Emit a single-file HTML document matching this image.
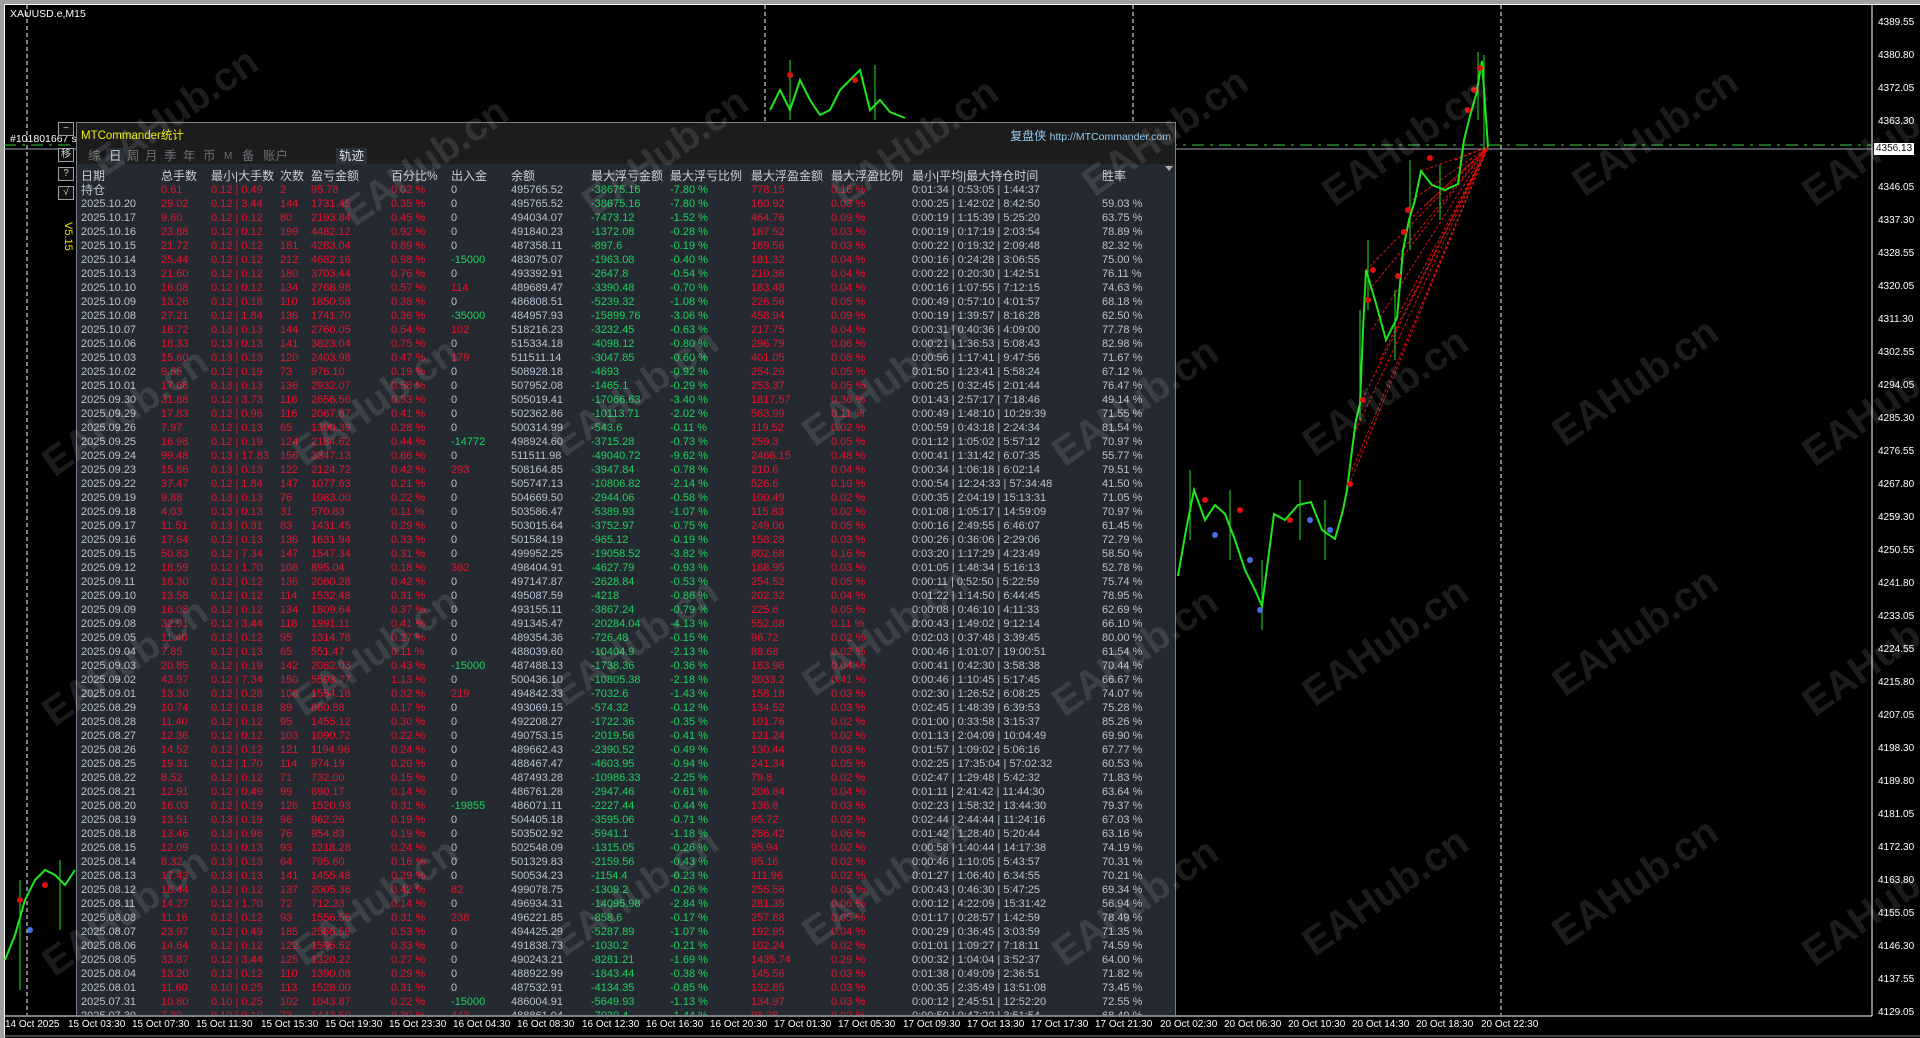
<!DOCTYPE html>
<html><head><meta charset="utf-8">
<style>
*{margin:0;padding:0;box-sizing:border-box}
body{width:1920px;height:1038px;background:#a0a0a0;position:relative;overflow:hidden;font-family:"Liberation Sans","Noto Sans CJK SC",sans-serif}
#chart{position:absolute;left:4px;top:4px;width:1916px;height:1034px;background:#000;border-left:1px solid #fff;border-top:1px solid #fff}
svg{position:absolute;left:0;top:0}
.ax{position:absolute;color:#fff;font-size:10px;white-space:nowrap}
#panel{position:absolute;left:76px;top:122px;width:1100px;height:894px;background:#1c1c1c;border:1px solid #7a808a;overflow:hidden}
#tbl{position:absolute;left:0;top:41px;width:1100px;height:860px;background:#252a32}
.t{position:absolute;font-size:11.5px;white-space:nowrap}
.r{position:absolute;left:0;height:14px;line-height:14px;font-size:11px;width:1100px}
.r i{position:absolute;font-style:normal;white-space:nowrap;color:#b9c2cf}
.r i:nth-child(1){left:4px}.r i:nth-child(2){left:84px}.r i:nth-child(3){left:134px}.r i:nth-child(4){left:203px}.r i:nth-child(5){left:234px}.r i:nth-child(6){left:314px}.r i:nth-child(7){left:374px}.r i:nth-child(8){left:434px}.r i:nth-child(9){left:514px}.r i:nth-child(10){left:593px}.r i:nth-child(11){left:674px}.r i:nth-child(12){left:754px}.r i:nth-child(13){left:835px}.r i:nth-child(14){left:1025px}
.r i:nth-child(2),.r i:nth-child(3),.r i:nth-child(4),.r i:nth-child(5),.r i:nth-child(6),.r i:nth-child(11),.r i:nth-child(12){color:#e5132b}
.r i:nth-child(9),.r i:nth-child(10){color:#1bd35a}
.r i.g{color:#1bd35a}.r i.d{color:#e5132b}
.h i{color:#c8d0dc!important;font-size:12px}
.btn{position:absolute;left:58px;width:16px;height:14px;border:1px solid #9aa0aa;color:#ccc;font-size:10px;text-align:center;line-height:12px;background:#111}
.wm{position:absolute;color:rgba(255,255,255,0.11);font-size:40px;font-weight:bold;transform:rotate(-35deg);white-space:nowrap;pointer-events:none}
.tab{position:absolute;top:25px;color:#6a6e74;font-size:12.5px;height:17px;line-height:17px}
</style></head><body>
<div id="chart"></div>
<svg width="1920" height="1038">
<g stroke="#fff" stroke-dasharray="4,3" stroke-width="1">
<line x1="27" y1="5" x2="27" y2="1015"/><line x1="765" y1="5" x2="765" y2="1015"/><line x1="1133" y1="5" x2="1133" y2="1015"/><line x1="1501" y1="5" x2="1501" y2="1015"/>
</g>
<line x1="1872" y1="4" x2="1872" y2="1016" stroke="#fff"/>
<line x1="4" y1="1016" x2="1872" y2="1016" stroke="#fff"/>
<line x1="4" y1="1036" x2="1920" y2="1036" stroke="#888"/>
<line x1="4" y1="149" x2="1872" y2="149" stroke="#9aa4b0"/>
<line x1="4" y1="145" x2="1872" y2="145" stroke="#3cd03c" stroke-dasharray="12,6,3,6"/>
<g stroke="#e01010" stroke-dasharray="3,2" stroke-width="1" fill="none">
<line x1="1360" y1="404" x2="1488" y2="147"/><line x1="1352" y1="470" x2="1488" y2="147"/><line x1="1356" y1="430" x2="1488" y2="147"/><line x1="1366" y1="270" x2="1488" y2="147"/><line x1="1369" y1="290" x2="1488" y2="147"/><line x1="1372" y1="330" x2="1488" y2="147"/><line x1="1397" y1="318" x2="1488" y2="147"/><line x1="1400" y1="260" x2="1488" y2="147"/><line x1="1409" y1="220" x2="1488" y2="147"/><line x1="1412" y1="200" x2="1488" y2="147"/><line x1="1421" y1="171" x2="1488" y2="147"/><line x1="1426" y1="205" x2="1488" y2="147"/><line x1="1347" y1="490" x2="1488" y2="147"/><line x1="1380" y1="360" x2="1488" y2="147"/><line x1="1455" y1="160" x2="1488" y2="147"/>
</g>
<g stroke="#1ee61e" stroke-width="2" fill="none">
<polyline points="1178,576 1186,530 1194,490 1205,520 1215,505 1225,514 1235,540 1245,570 1255,590 1262,606 1268,560 1274,514 1285,520 1298,505 1311,502 1322,530 1335,539 1343,510 1347,490 1352,450 1356,420 1360,404 1363,330 1366,270 1375,300 1386,340 1397,318 1403,250 1409,220 1415,200 1421,171 1432,185 1445,190 1458,184 1464,140 1470,116 1476,95 1482,61 1488,147"/>
<polyline points="5,960 15,935 25,900 35,880 45,870 55,875 65,885 75,870"/>
<polyline points="770,110 780,90 790,110 800,80 810,100 820,115 830,110 840,90 850,80 860,70 870,110 880,100 890,112 905,118"/>
</g>
<g stroke="#1ee61e" stroke-width="1">
<line x1="1190" y1="470" x2="1190" y2="540"/><line x1="1230" y1="490" x2="1230" y2="560"/><line x1="1262" y1="560" x2="1262" y2="630"/><line x1="1300" y1="480" x2="1300" y2="540"/><line x1="1325" y1="500" x2="1325" y2="560"/><line x1="1360" y1="310" x2="1360" y2="420"/><line x1="1368" y1="240" x2="1368" y2="310"/><line x1="1395" y1="290" x2="1395" y2="360"/><line x1="1410" y1="160" x2="1410" y2="250"/><line x1="1440" y1="165" x2="1440" y2="220"/><line x1="1478" y1="52" x2="1478" y2="120"/><line x1="1484" y1="55" x2="1484" y2="150"/><line x1="790" y1="60" x2="790" y2="120"/><line x1="875" y1="65" x2="875" y2="120"/><line x1="20" y1="880" x2="20" y2="990"/><line x1="60" y1="860" x2="60" y2="930"/>
</g>
<g fill="#e01010">
<circle cx="1205" cy="500" r="3"/><circle cx="1240" cy="510" r="3"/><circle cx="1290" cy="520" r="3"/><circle cx="1350" cy="484" r="3"/><circle cx="1363" cy="400" r="3"/><circle cx="1368" cy="300" r="3"/><circle cx="1373" cy="270" r="3"/><circle cx="1398" cy="276" r="3"/><circle cx="1404" cy="232" r="3"/><circle cx="1408" cy="210" r="3"/><circle cx="1430" cy="158" r="3"/><circle cx="1468" cy="110" r="3"/><circle cx="1474" cy="90" r="3"/><circle cx="1480" cy="68" r="3"/><circle cx="790" cy="75" r="3"/><circle cx="855" cy="80" r="3"/><circle cx="20" cy="900" r="3"/><circle cx="45" cy="885" r="3"/>
</g>
<g fill="#4a70e0"><circle cx="1215" cy="535" r="3"/><circle cx="1250" cy="560" r="3"/><circle cx="1260" cy="610" r="3"/><circle cx="1310" cy="520" r="3"/><circle cx="1330" cy="530" r="3"/><circle cx="30" cy="930" r="3"/></g>
</svg>
<div class="ax" style="left:10px;top:8px;font-size:10.5px">XAUUSD.e,M15</div>
<div class="ax" style="left:10px;top:133px;font-size:10.5px">#101801667 se</div>
<div class="ax" style="left:1878px;top:17px">4389.55</div><div class="ax" style="left:1878px;top:50px">4380.80</div><div class="ax" style="left:1878px;top:83px">4372.05</div><div class="ax" style="left:1878px;top:116px">4363.30</div><div class="ax" style="left:1878px;top:182px">4346.05</div><div class="ax" style="left:1878px;top:215px">4337.30</div><div class="ax" style="left:1878px;top:248px">4328.55</div><div class="ax" style="left:1878px;top:281px">4320.05</div><div class="ax" style="left:1878px;top:314px">4311.30</div><div class="ax" style="left:1878px;top:347px">4302.55</div><div class="ax" style="left:1878px;top:380px">4294.05</div><div class="ax" style="left:1878px;top:413px">4285.30</div><div class="ax" style="left:1878px;top:446px">4276.55</div><div class="ax" style="left:1878px;top:479px">4267.80</div><div class="ax" style="left:1878px;top:512px">4259.30</div><div class="ax" style="left:1878px;top:545px">4250.55</div><div class="ax" style="left:1878px;top:578px">4241.80</div><div class="ax" style="left:1878px;top:611px">4233.05</div><div class="ax" style="left:1878px;top:644px">4224.55</div><div class="ax" style="left:1878px;top:677px">4215.80</div><div class="ax" style="left:1878px;top:710px">4207.05</div><div class="ax" style="left:1878px;top:743px">4198.30</div><div class="ax" style="left:1878px;top:776px">4189.80</div><div class="ax" style="left:1878px;top:809px">4181.05</div><div class="ax" style="left:1878px;top:842px">4172.30</div><div class="ax" style="left:1878px;top:875px">4163.80</div><div class="ax" style="left:1878px;top:908px">4155.05</div><div class="ax" style="left:1878px;top:941px">4146.30</div><div class="ax" style="left:1878px;top:974px">4137.55</div><div class="ax" style="left:1878px;top:1007px">4129.05</div>
<div class="ax" style="left:1874px;top:143px;background:#fff;color:#000;padding:0 2px;line-height:12px">4356.13</div>
<div class="ax" style="left:5px;top:1019px">14 Oct 2025</div><div class="ax" style="left:68px;top:1019px">15 Oct 03:30</div><div class="ax" style="left:132px;top:1019px">15 Oct 07:30</div><div class="ax" style="left:196px;top:1019px">15 Oct 11:30</div><div class="ax" style="left:261px;top:1019px">15 Oct 15:30</div><div class="ax" style="left:325px;top:1019px">15 Oct 19:30</div><div class="ax" style="left:389px;top:1019px">15 Oct 23:30</div><div class="ax" style="left:453px;top:1019px">16 Oct 04:30</div><div class="ax" style="left:517px;top:1019px">16 Oct 08:30</div><div class="ax" style="left:582px;top:1019px">16 Oct 12:30</div><div class="ax" style="left:646px;top:1019px">16 Oct 16:30</div><div class="ax" style="left:710px;top:1019px">16 Oct 20:30</div><div class="ax" style="left:774px;top:1019px">17 Oct 01:30</div><div class="ax" style="left:838px;top:1019px">17 Oct 05:30</div><div class="ax" style="left:903px;top:1019px">17 Oct 09:30</div><div class="ax" style="left:967px;top:1019px">17 Oct 13:30</div><div class="ax" style="left:1031px;top:1019px">17 Oct 17:30</div><div class="ax" style="left:1095px;top:1019px">17 Oct 21:30</div><div class="ax" style="left:1160px;top:1019px">20 Oct 02:30</div><div class="ax" style="left:1224px;top:1019px">20 Oct 06:30</div><div class="ax" style="left:1288px;top:1019px">20 Oct 10:30</div><div class="ax" style="left:1352px;top:1019px">20 Oct 14:30</div><div class="ax" style="left:1416px;top:1019px">20 Oct 18:30</div><div class="ax" style="left:1481px;top:1019px">20 Oct 22:30</div>
<div class="btn" style="top:122px">−</div><div class="btn" style="top:148px">移</div><div class="btn" style="top:167px">?</div><div class="btn" style="top:186px">√</div>
<div style="position:absolute;top:222px;color:#e8e800;font-size:11px;transform:rotate(90deg);transform-origin:left top;left:74px">V5.15</div>
<div id="panel">
<div class="t" style="left:4px;top:4px;color:#f0f000">MTCommander统计</div>
<div class="t" style="right:4px;top:4px;color:#8fcaf0;font-size:12px">复盘侠 <span style="font-size:10.5px">http://MTCommander.com</span></div>
<div class="tab" style="left:11px">综</div>
<div class="tab" style="left:29px;background:#2a3039;color:#c8d0dc;padding:0 3px">日</div>
<div class="tab" style="left:50px">周</div><div class="tab" style="left:68px">月</div><div class="tab" style="left:87px">季</div><div class="tab" style="left:106px">年</div><div class="tab" style="left:126px">币</div><div class="tab" style="left:147px;font-size:10px">M</div><div class="tab" style="left:165px">备</div><div class="tab" style="left:186px">账户</div>
<div class="tab" style="left:259px;background:#2a3039;color:#d8dde4;padding:0 3px">轨迹</div>
<div id="tbl">
<div style="position:absolute;right:4px;top:2px;width:0;height:0;border-left:4px solid transparent;border-right:4px solid transparent;border-top:5px solid #aaa"></div>
<div class="r h" style="top:5px"><i>日期</i><i>总手数</i><i>最小|大手数</i><i>次数</i><i>盈亏金额</i><i>百分比%</i><i>出入金</i><i>余额</i><i>最大浮亏金额</i><i>最大浮亏比例</i><i>最大浮盈金额</i><i>最大浮盈比例</i><i>最小|平均|最大持仓时间</i><i>胜率</i></div>
<div class="r" style="top:19px"><i style="font-size:12px">持仓</i><i>0.61</i><i>0.12 | 0.49</i><i>2</i><i>95.78</i><i>0.02 %</i><i>0</i><i>495765.52</i><i>-38675.16</i><i>-7.80 %</i><i>778.15</i><i>0.16 %</i><i>0:01:34 | 0:53:05 | 1:44:37</i><i></i></div>
<div class="r" style="top:33px"><i>2025.10.20</i><i>29.02</i><i>0.12 | 3.44</i><i>144</i><i>1731.45</i><i>0.35 %</i><i>0</i><i>495765.52</i><i>-38675.16</i><i>-7.80 %</i><i>160.92</i><i>0.03 %</i><i>0:00:25 | 1:42:02 | 8:42:50</i><i>59.03 %</i></div>
<div class="r" style="top:47px"><i>2025.10.17</i><i>9.60</i><i>0.12 | 0.12</i><i>80</i><i>2193.84</i><i>0.45 %</i><i>0</i><i>494034.07</i><i>-7473.12</i><i>-1.52 %</i><i>464.76</i><i>0.09 %</i><i>0:00:19 | 1:15:39 | 5:25:20</i><i>63.75 %</i></div>
<div class="r" style="top:61px"><i>2025.10.16</i><i>23.88</i><i>0.12 | 0.12</i><i>199</i><i>4482.12</i><i>0.92 %</i><i>0</i><i>491840.23</i><i>-1372.08</i><i>-0.28 %</i><i>167.52</i><i>0.03 %</i><i>0:00:19 | 0:17:19 | 2:03:54</i><i>78.89 %</i></div>
<div class="r" style="top:75px"><i>2025.10.15</i><i>21.72</i><i>0.12 | 0.12</i><i>181</i><i>4283.04</i><i>0.89 %</i><i>0</i><i>487358.11</i><i>-897.6</i><i>-0.19 %</i><i>169.56</i><i>0.03 %</i><i>0:00:22 | 0:19:32 | 2:09:48</i><i>82.32 %</i></div>
<div class="r" style="top:89px"><i>2025.10.14</i><i>25.44</i><i>0.12 | 0.12</i><i>212</i><i>4682.16</i><i>0.98 %</i><i class="g">-15000</i><i>483075.07</i><i>-1963.08</i><i>-0.40 %</i><i>181.32</i><i>0.04 %</i><i>0:00:16 | 0:24:28 | 3:06:55</i><i>75.00 %</i></div>
<div class="r" style="top:103px"><i>2025.10.13</i><i>21.60</i><i>0.12 | 0.12</i><i>180</i><i>3703.44</i><i>0.76 %</i><i>0</i><i>493392.91</i><i>-2647.8</i><i>-0.54 %</i><i>210.36</i><i>0.04 %</i><i>0:00:22 | 0:20:30 | 1:42:51</i><i>76.11 %</i></div>
<div class="r" style="top:117px"><i>2025.10.10</i><i>16.08</i><i>0.12 | 0.12</i><i>134</i><i>2768.98</i><i>0.57 %</i><i class="d">114</i><i>489689.47</i><i>-3390.48</i><i>-0.70 %</i><i>183.48</i><i>0.04 %</i><i>0:00:16 | 1:07:55 | 7:12:15</i><i>74.63 %</i></div>
<div class="r" style="top:131px"><i>2025.10.09</i><i>13.26</i><i>0.12 | 0.18</i><i>110</i><i>1850.58</i><i>0.38 %</i><i>0</i><i>486808.51</i><i>-5239.32</i><i>-1.08 %</i><i>226.56</i><i>0.05 %</i><i>0:00:49 | 0:57:10 | 4:01:57</i><i>68.18 %</i></div>
<div class="r" style="top:145px"><i>2025.10.08</i><i>27.21</i><i>0.12 | 1.84</i><i>136</i><i>1741.70</i><i>0.36 %</i><i class="g">-35000</i><i>484957.93</i><i>-15899.76</i><i>-3.06 %</i><i>458.94</i><i>0.09 %</i><i>0:00:19 | 1:39:57 | 8:16:28</i><i>62.50 %</i></div>
<div class="r" style="top:159px"><i>2025.10.07</i><i>18.72</i><i>0.13 | 0.13</i><i>144</i><i>2760.05</i><i>0.54 %</i><i class="d">102</i><i>518216.23</i><i>-3232.45</i><i>-0.63 %</i><i>217.75</i><i>0.04 %</i><i>0:00:31 | 0:40:36 | 4:09:00</i><i>77.78 %</i></div>
<div class="r" style="top:173px"><i>2025.10.06</i><i>18.33</i><i>0.13 | 0.13</i><i>141</i><i>3823.04</i><i>0.75 %</i><i>0</i><i>515334.18</i><i>-4098.12</i><i>-0.80 %</i><i>296.79</i><i>0.06 %</i><i>0:00:21 | 1:36:53 | 5:08:43</i><i>82.98 %</i></div>
<div class="r" style="top:187px"><i>2025.10.03</i><i>15.60</i><i>0.13 | 0.13</i><i>120</i><i>2403.98</i><i>0.47 %</i><i class="d">179</i><i>511511.14</i><i>-3047.85</i><i>-0.60 %</i><i>401.05</i><i>0.08 %</i><i>0:00:56 | 1:17:41 | 9:47:56</i><i>71.67 %</i></div>
<div class="r" style="top:201px"><i>2025.10.02</i><i>9.55</i><i>0.12 | 0.19</i><i>73</i><i>976.10</i><i>0.19 %</i><i>0</i><i>508928.18</i><i>-4693</i><i>-0.92 %</i><i>254.26</i><i>0.05 %</i><i>0:01:50 | 1:23:41 | 5:58:24</i><i>67.12 %</i></div>
<div class="r" style="top:215px"><i>2025.10.01</i><i>17.68</i><i>0.13 | 0.13</i><i>136</i><i>2932.07</i><i>0.58 %</i><i>0</i><i>507952.08</i><i>-1465.1</i><i>-0.29 %</i><i>253.37</i><i>0.05 %</i><i>0:00:25 | 0:32:45 | 2:01:44</i><i>76.47 %</i></div>
<div class="r" style="top:229px"><i>2025.09.30</i><i>31.88</i><i>0.12 | 3.73</i><i>116</i><i>2656.56</i><i>0.53 %</i><i>0</i><i>505019.41</i><i>-17066.63</i><i>-3.40 %</i><i>1817.57</i><i>0.36 %</i><i>0:01:43 | 2:57:17 | 7:18:46</i><i>49.14 %</i></div>
<div class="r" style="top:243px"><i>2025.09.29</i><i>17.83</i><i>0.12 | 0.96</i><i>116</i><i>2067.87</i><i>0.41 %</i><i>0</i><i>502362.86</i><i>-10113.71</i><i>-2.02 %</i><i>563.99</i><i>0.11 %</i><i>0:00:49 | 1:48:10 | 10:29:39</i><i>71.55 %</i></div>
<div class="r" style="top:257px"><i>2025.09.26</i><i>7.97</i><i>0.12 | 0.13</i><i>65</i><i>1390.39</i><i>0.28 %</i><i>0</i><i>500314.99</i><i>-543.6</i><i>-0.11 %</i><i>119.52</i><i>0.02 %</i><i>0:00:59 | 0:43:18 | 2:24:34</i><i>81.54 %</i></div>
<div class="r" style="top:271px"><i>2025.09.25</i><i>16.98</i><i>0.12 | 0.19</i><i>124</i><i>2184.62</i><i>0.44 %</i><i class="g">-14772</i><i>498924.60</i><i>-3715.28</i><i>-0.73 %</i><i>259.3</i><i>0.05 %</i><i>0:01:12 | 1:05:02 | 5:57:12</i><i>70.97 %</i></div>
<div class="r" style="top:285px"><i>2025.09.24</i><i>99.48</i><i>0.13 | 17.83</i><i>156</i><i>3347.13</i><i>0.66 %</i><i>0</i><i>511511.98</i><i>-49040.72</i><i>-9.62 %</i><i>2466.15</i><i>0.48 %</i><i>0:00:41 | 1:31:42 | 6:07:35</i><i>55.77 %</i></div>
<div class="r" style="top:299px"><i>2025.09.23</i><i>15.86</i><i>0.13 | 0.13</i><i>122</i><i>2124.72</i><i>0.42 %</i><i class="d">293</i><i>508164.85</i><i>-3947.84</i><i>-0.78 %</i><i>210.6</i><i>0.04 %</i><i>0:00:34 | 1:06:18 | 6:02:14</i><i>79.51 %</i></div>
<div class="r" style="top:313px"><i>2025.09.22</i><i>37.47</i><i>0.12 | 1.84</i><i>147</i><i>1077.63</i><i>0.21 %</i><i>0</i><i>505747.13</i><i>-10806.82</i><i>-2.14 %</i><i>526.6</i><i>0.10 %</i><i>0:00:54 | 12:24:33 | 57:34:48</i><i>41.50 %</i></div>
<div class="r" style="top:327px"><i>2025.09.19</i><i>9.88</i><i>0.13 | 0.13</i><i>76</i><i>1083.00</i><i>0.22 %</i><i>0</i><i>504669.50</i><i>-2944.06</i><i>-0.58 %</i><i>100.49</i><i>0.02 %</i><i>0:00:35 | 2:04:19 | 15:13:31</i><i>71.05 %</i></div>
<div class="r" style="top:341px"><i>2025.09.18</i><i>4.03</i><i>0.13 | 0.13</i><i>31</i><i>570.83</i><i>0.11 %</i><i>0</i><i>503586.47</i><i>-5389.93</i><i>-1.07 %</i><i>115.83</i><i>0.02 %</i><i>0:01:08 | 1:05:17 | 14:59:09</i><i>70.97 %</i></div>
<div class="r" style="top:355px"><i>2025.09.17</i><i>11.51</i><i>0.13 | 0.31</i><i>83</i><i>1431.45</i><i>0.29 %</i><i>0</i><i>503015.64</i><i>-3752.97</i><i>-0.75 %</i><i>249.06</i><i>0.05 %</i><i>0:00:16 | 2:49:55 | 6:46:07</i><i>61.45 %</i></div>
<div class="r" style="top:369px"><i>2025.09.16</i><i>17.64</i><i>0.12 | 0.13</i><i>136</i><i>1631.94</i><i>0.33 %</i><i>0</i><i>501584.19</i><i>-965.12</i><i>-0.19 %</i><i>158.28</i><i>0.03 %</i><i>0:00:26 | 0:36:06 | 2:29:06</i><i>72.79 %</i></div>
<div class="r" style="top:383px"><i>2025.09.15</i><i>50.83</i><i>0.12 | 7.34</i><i>147</i><i>1547.34</i><i>0.31 %</i><i>0</i><i>499952.25</i><i>-19058.52</i><i>-3.82 %</i><i>802.68</i><i>0.16 %</i><i>0:03:20 | 1:17:29 | 4:23:49</i><i>58.50 %</i></div>
<div class="r" style="top:397px"><i>2025.09.12</i><i>18.59</i><i>0.12 | 1.70</i><i>108</i><i>895.04</i><i>0.18 %</i><i class="d">362</i><i>498404.91</i><i>-4627.79</i><i>-0.93 %</i><i>168.95</i><i>0.03 %</i><i>0:01:05 | 1:48:34 | 5:16:13</i><i>52.78 %</i></div>
<div class="r" style="top:411px"><i>2025.09.11</i><i>18.30</i><i>0.12 | 0.12</i><i>136</i><i>2060.28</i><i>0.42 %</i><i>0</i><i>497147.87</i><i>-2628.84</i><i>-0.53 %</i><i>254.52</i><i>0.05 %</i><i>0:00:11 | 0:52:50 | 5:22:59</i><i>75.74 %</i></div>
<div class="r" style="top:425px"><i>2025.09.10</i><i>13.58</i><i>0.12 | 0.12</i><i>114</i><i>1532.48</i><i>0.31 %</i><i>0</i><i>495087.59</i><i>-4218</i><i>-0.86 %</i><i>202.32</i><i>0.04 %</i><i>0:01:22 | 1:14:50 | 6:44:45</i><i>78.95 %</i></div>
<div class="r" style="top:439px"><i>2025.09.09</i><i>16.08</i><i>0.12 | 0.12</i><i>134</i><i>1809.64</i><i>0.37 %</i><i>0</i><i>493155.11</i><i>-3867.24</i><i>-0.79 %</i><i>225.6</i><i>0.05 %</i><i>0:00:08 | 0:46:10 | 4:11:33</i><i>62.69 %</i></div>
<div class="r" style="top:453px"><i>2025.09.08</i><i>32.91</i><i>0.12 | 3.44</i><i>118</i><i>1991.11</i><i>0.41 %</i><i>0</i><i>491345.47</i><i>-20284.04</i><i>-4.13 %</i><i>552.68</i><i>0.11 %</i><i>0:00:43 | 1:49:02 | 9:12:14</i><i>66.10 %</i></div>
<div class="r" style="top:467px"><i>2025.09.05</i><i>11.40</i><i>0.12 | 0.12</i><i>95</i><i>1314.78</i><i>0.27 %</i><i>0</i><i>489354.36</i><i>-726.48</i><i>-0.15 %</i><i>96.72</i><i>0.02 %</i><i>0:02:03 | 0:37:48 | 3:39:45</i><i>80.00 %</i></div>
<div class="r" style="top:481px"><i>2025.09.04</i><i>7.85</i><i>0.12 | 0.13</i><i>65</i><i>551.47</i><i>0.11 %</i><i>0</i><i>488039.60</i><i>-10404.9</i><i>-2.13 %</i><i>88.68</i><i>0.02 %</i><i>0:00:46 | 1:01:07 | 19:00:51</i><i>61.54 %</i></div>
<div class="r" style="top:495px"><i>2025.09.03</i><i>20.85</i><i>0.12 | 0.19</i><i>142</i><i>2082.03</i><i>0.43 %</i><i class="g">-15000</i><i>487488.13</i><i>-1738.36</i><i>-0.36 %</i><i>183.96</i><i>0.04 %</i><i>0:00:41 | 0:42:30 | 3:58:38</i><i>70.44 %</i></div>
<div class="r" style="top:509px"><i>2025.09.02</i><i>43.97</i><i>0.12 | 7.34</i><i>150</i><i>5593.77</i><i>1.13 %</i><i>0</i><i>500436.10</i><i>-10805.38</i><i>-2.18 %</i><i>2033.2</i><i>0.41 %</i><i>0:00:46 | 1:10:45 | 5:17:45</i><i>66.67 %</i></div>
<div class="r" style="top:523px"><i>2025.09.01</i><i>13.30</i><i>0.12 | 0.28</i><i>108</i><i>1554.18</i><i>0.32 %</i><i class="d">219</i><i>494842.33</i><i>-7032.6</i><i>-1.43 %</i><i>158.18</i><i>0.03 %</i><i>0:02:30 | 1:26:52 | 6:08:25</i><i>74.07 %</i></div>
<div class="r" style="top:537px"><i>2025.08.29</i><i>10.74</i><i>0.12 | 0.18</i><i>89</i><i>860.88</i><i>0.17 %</i><i>0</i><i>493069.15</i><i>-574.32</i><i>-0.12 %</i><i>134.52</i><i>0.03 %</i><i>0:02:45 | 1:48:39 | 6:39:53</i><i>75.28 %</i></div>
<div class="r" style="top:551px"><i>2025.08.28</i><i>11.40</i><i>0.12 | 0.12</i><i>95</i><i>1455.12</i><i>0.30 %</i><i>0</i><i>492208.27</i><i>-1722.36</i><i>-0.35 %</i><i>101.76</i><i>0.02 %</i><i>0:01:00 | 0:33:58 | 3:15:37</i><i>85.26 %</i></div>
<div class="r" style="top:565px"><i>2025.08.27</i><i>12.36</i><i>0.12 | 0.12</i><i>103</i><i>1090.72</i><i>0.22 %</i><i>0</i><i>490753.15</i><i>-2019.56</i><i>-0.41 %</i><i>121.24</i><i>0.02 %</i><i>0:01:13 | 2:04:09 | 10:04:49</i><i>69.90 %</i></div>
<div class="r" style="top:579px"><i>2025.08.26</i><i>14.52</i><i>0.12 | 0.12</i><i>121</i><i>1194.96</i><i>0.24 %</i><i>0</i><i>489662.43</i><i>-2390.52</i><i>-0.49 %</i><i>130.44</i><i>0.03 %</i><i>0:01:57 | 1:09:02 | 5:06:16</i><i>67.77 %</i></div>
<div class="r" style="top:593px"><i>2025.08.25</i><i>19.31</i><i>0.12 | 1.70</i><i>114</i><i>974.19</i><i>0.20 %</i><i>0</i><i>488467.47</i><i>-4603.95</i><i>-0.94 %</i><i>241.34</i><i>0.05 %</i><i>0:02:25 | 17:35:04 | 57:02:32</i><i>60.53 %</i></div>
<div class="r" style="top:607px"><i>2025.08.22</i><i>8.52</i><i>0.12 | 0.12</i><i>71</i><i>732.00</i><i>0.15 %</i><i>0</i><i>487493.28</i><i>-10986.33</i><i>-2.25 %</i><i>79.8</i><i>0.02 %</i><i>0:02:47 | 1:29:48 | 5:42:32</i><i>71.83 %</i></div>
<div class="r" style="top:621px"><i>2025.08.21</i><i>12.91</i><i>0.12 | 0.49</i><i>99</i><i>690.17</i><i>0.14 %</i><i>0</i><i>486761.28</i><i>-2947.46</i><i>-0.61 %</i><i>206.64</i><i>0.04 %</i><i>0:01:11 | 2:41:42 | 11:44:30</i><i>63.64 %</i></div>
<div class="r" style="top:635px"><i>2025.08.20</i><i>16.03</i><i>0.12 | 0.19</i><i>126</i><i>1520.93</i><i>0.31 %</i><i class="g">-19855</i><i>486071.11</i><i>-2227.44</i><i>-0.44 %</i><i>136.8</i><i>0.03 %</i><i>0:02:23 | 1:58:32 | 13:44:30</i><i>79.37 %</i></div>
<div class="r" style="top:649px"><i>2025.08.19</i><i>13.51</i><i>0.13 | 0.19</i><i>96</i><i>962.26</i><i>0.19 %</i><i>0</i><i>504405.18</i><i>-3595.06</i><i>-0.71 %</i><i>95.72</i><i>0.02 %</i><i>0:02:44 | 2:44:44 | 11:24:16</i><i>67.03 %</i></div>
<div class="r" style="top:663px"><i>2025.08.18</i><i>13.46</i><i>0.13 | 0.96</i><i>76</i><i>954.83</i><i>0.19 %</i><i>0</i><i>503502.92</i><i>-5941.1</i><i>-1.18 %</i><i>286.42</i><i>0.06 %</i><i>0:01:42 | 1:28:40 | 5:20:44</i><i>63.16 %</i></div>
<div class="r" style="top:677px"><i>2025.08.15</i><i>12.09</i><i>0.13 | 0.13</i><i>93</i><i>1218.28</i><i>0.24 %</i><i>0</i><i>502548.09</i><i>-1315.05</i><i>-0.26 %</i><i>95.94</i><i>0.02 %</i><i>0:00:58 | 1:40:44 | 14:17:38</i><i>74.19 %</i></div>
<div class="r" style="top:691px"><i>2025.08.14</i><i>8.32</i><i>0.13 | 0.13</i><i>64</i><i>795.60</i><i>0.16 %</i><i>0</i><i>501329.83</i><i>-2159.56</i><i>-0.43 %</i><i>95.16</i><i>0.02 %</i><i>0:00:46 | 1:10:05 | 5:43:57</i><i>70.31 %</i></div>
<div class="r" style="top:705px"><i>2025.08.13</i><i>17.43</i><i>0.13 | 0.13</i><i>141</i><i>1455.48</i><i>0.29 %</i><i>0</i><i>500534.23</i><i>-1154.4</i><i>-0.23 %</i><i>111.96</i><i>0.02 %</i><i>0:01:27 | 1:06:40 | 6:34:55</i><i>70.21 %</i></div>
<div class="r" style="top:719px"><i>2025.08.12</i><i>18.44</i><i>0.12 | 0.12</i><i>137</i><i>2005.36</i><i>0.42 %</i><i class="d">82</i><i>499078.75</i><i>-1309.2</i><i>-0.26 %</i><i>255.56</i><i>0.05 %</i><i>0:00:43 | 0:46:30 | 5:47:25</i><i>69.34 %</i></div>
<div class="r" style="top:733px"><i>2025.08.11</i><i>14.27</i><i>0.12 | 1.70</i><i>72</i><i>712.33</i><i>0.14 %</i><i>0</i><i>496934.31</i><i>-14095.98</i><i>-2.84 %</i><i>281.35</i><i>0.06 %</i><i>0:00:12 | 4:22:09 | 15:31:42</i><i>56.94 %</i></div>
<div class="r" style="top:747px"><i>2025.08.08</i><i>11.16</i><i>0.12 | 0.12</i><i>93</i><i>1556.56</i><i>0.31 %</i><i class="d">238</i><i>496221.85</i><i>-858.6</i><i>-0.17 %</i><i>257.88</i><i>0.05 %</i><i>0:01:17 | 0:28:57 | 1:42:59</i><i>78.49 %</i></div>
<div class="r" style="top:761px"><i>2025.08.07</i><i>23.97</i><i>0.12 | 0.49</i><i>185</i><i>2586.56</i><i>0.53 %</i><i>0</i><i>494425.29</i><i>-5287.89</i><i>-1.07 %</i><i>192.95</i><i>0.04 %</i><i>0:00:29 | 0:36:45 | 3:03:59</i><i>71.35 %</i></div>
<div class="r" style="top:775px"><i>2025.08.06</i><i>14.64</i><i>0.12 | 0.12</i><i>122</i><i>1595.52</i><i>0.33 %</i><i>0</i><i>491838.73</i><i>-1030.2</i><i>-0.21 %</i><i>102.24</i><i>0.02 %</i><i>0:01:01 | 1:09:27 | 7:18:11</i><i>74.59 %</i></div>
<div class="r" style="top:789px"><i>2025.08.05</i><i>33.87</i><i>0.12 | 3.44</i><i>125</i><i>1320.22</i><i>0.27 %</i><i>0</i><i>490243.21</i><i>-8281.21</i><i>-1.69 %</i><i>1435.74</i><i>0.29 %</i><i>0:00:32 | 1:04:04 | 3:52:37</i><i>64.00 %</i></div>
<div class="r" style="top:803px"><i>2025.08.04</i><i>13.20</i><i>0.12 | 0.12</i><i>110</i><i>1390.08</i><i>0.29 %</i><i>0</i><i>488922.99</i><i>-1843.44</i><i>-0.38 %</i><i>145.56</i><i>0.03 %</i><i>0:01:38 | 0:49:09 | 2:36:51</i><i>71.82 %</i></div>
<div class="r" style="top:817px"><i>2025.08.01</i><i>11.60</i><i>0.10 | 0.25</i><i>113</i><i>1528.00</i><i>0.31 %</i><i>0</i><i>487532.91</i><i>-4134.35</i><i>-0.85 %</i><i>132.85</i><i>0.03 %</i><i>0:00:35 | 2:35:49 | 13:51:08</i><i>73.45 %</i></div>
<div class="r" style="top:831px"><i>2025.07.31</i><i>10.80</i><i>0.10 | 0.25</i><i>102</i><i>1043.87</i><i>0.22 %</i><i class="g">-15000</i><i>486004.91</i><i>-5649.93</i><i>-1.13 %</i><i>134.97</i><i>0.03 %</i><i>0:00:12 | 2:45:51 | 12:52:20</i><i>72.55 %</i></div>
<div class="r" style="top:845px"><i>2025.07.30</i><i>7.30</i><i>0.10 | 0.10</i><i>73</i><i>1443.50</i><i>0.30 %</i><i class="d">443</i><i>488861.04</i><i>-7030.4</i><i>-1.44 %</i><i>98.28</i><i>0.02 %</i><i>0:00:50 | 0:47:22 | 3:51:54</i><i>68.49 %</i></div>
</div>
</div>
<div class="wm" style="left:80px;top:90px">EAHub.cn</div><div class="wm" style="left:330px;top:140px">EAHub.cn</div><div class="wm" style="left:570px;top:130px">EAHub.cn</div><div class="wm" style="left:820px;top:120px">EAHub.cn</div><div class="wm" style="left:1070px;top:110px">EAHub.cn</div><div class="wm" style="left:1310px;top:120px">EAHub.cn</div><div class="wm" style="left:1560px;top:110px">EAHub.cn</div><div class="wm" style="left:1790px;top:120px">EAHub.cn</div>
<div class="wm" style="left:30px;top:390px">EAHub.cn</div><div class="wm" style="left:280px;top:380px">EAHub.cn</div><div class="wm" style="left:540px;top:370px">EAHub.cn</div><div class="wm" style="left:790px;top:360px">EAHub.cn</div><div class="wm" style="left:1040px;top:380px">EAHub.cn</div><div class="wm" style="left:1290px;top:370px">EAHub.cn</div><div class="wm" style="left:1540px;top:360px">EAHub.cn</div><div class="wm" style="left:1790px;top:380px">EAHub.cn</div>
<div class="wm" style="left:30px;top:640px">EAHub.cn</div><div class="wm" style="left:280px;top:630px">EAHub.cn</div><div class="wm" style="left:540px;top:620px">EAHub.cn</div><div class="wm" style="left:790px;top:610px">EAHub.cn</div><div class="wm" style="left:1040px;top:630px">EAHub.cn</div><div class="wm" style="left:1290px;top:620px">EAHub.cn</div><div class="wm" style="left:1540px;top:610px">EAHub.cn</div><div class="wm" style="left:1790px;top:630px">EAHub.cn</div>
<div class="wm" style="left:30px;top:890px">EAHub.cn</div><div class="wm" style="left:280px;top:880px">EAHub.cn</div><div class="wm" style="left:540px;top:870px">EAHub.cn</div><div class="wm" style="left:790px;top:860px">EAHub.cn</div><div class="wm" style="left:1040px;top:880px">EAHub.cn</div><div class="wm" style="left:1290px;top:870px">EAHub.cn</div><div class="wm" style="left:1540px;top:860px">EAHub.cn</div><div class="wm" style="left:1790px;top:880px">EAHub.cn</div>
</body></html>
